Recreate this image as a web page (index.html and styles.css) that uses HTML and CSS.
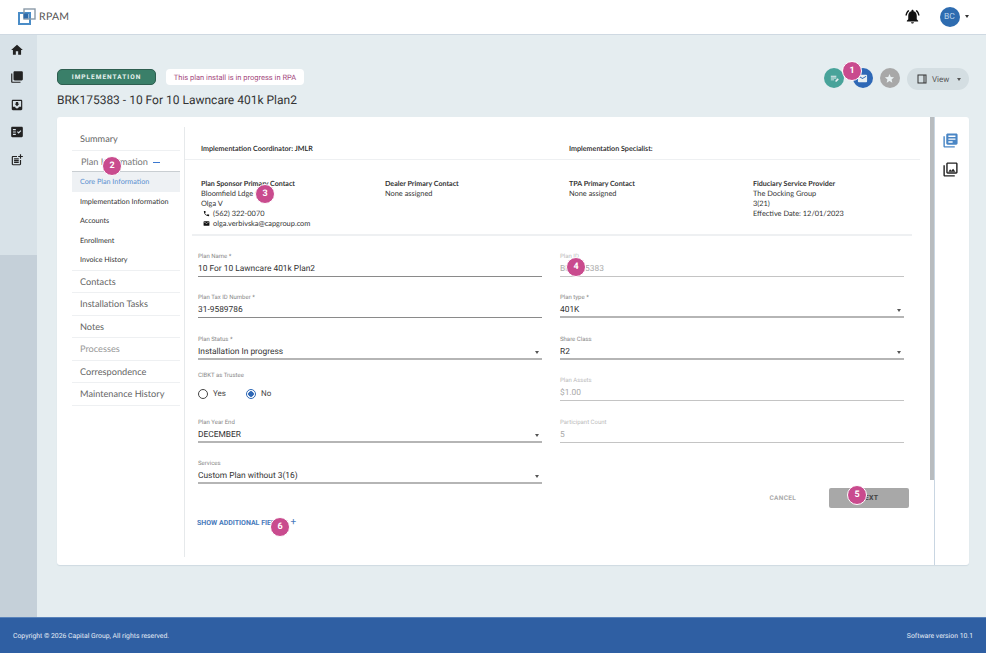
FILE: index.html
```html
<!DOCTYPE html>
<html lang="en">
<head>
<meta charset="utf-8">
<title>RPAM</title>
<link rel="stylesheet" href="styles.css">
</head>
<body>
<div class="app">
  <header class="topbar">
    <div class="brand">
      <svg class="logo" viewBox="0 0 18 17"><rect x="1" y="5" width="11" height="11" fill="none" stroke="#4a8cc7" stroke-width="2"/><rect x="6" y="1" width="11" height="10" fill="none" stroke="#8a9aa8" stroke-width="1.4"/><rect x="5.5" y="5.5" width="5" height="5" fill="#2f6aa8"/></svg>
      <span class="brand-name">RPAM</span>
    </div>
    <div class="top-right">
      <svg class="bell" viewBox="0 0 24 24"><path d="M7.58 4.08 6.15 2.65C3.75 4.48 2.17 7.3 2.03 10.5h2c.15-2.65 1.51-4.97 3.55-6.42zm12.39 6.42h2c-.15-3.2-1.73-6.02-4.12-7.85l-1.42 1.43c2.02 1.45 3.39 3.77 3.54 6.42zM18 11c0-3.07-1.64-5.64-4.5-6.32V4c0-.83-.67-1.5-1.5-1.5s-1.5.67-1.5 1.5v.68C7.63 5.36 6 7.92 6 11v5l-2 2v1h16v-1l-2-2v-5zm-6 11c.14 0 .27-.01.4-.04.65-.14 1.18-.58 1.44-1.18.1-.24.15-.5.15-.78h-4c.01 1.1.9 2 2.01 2z"/></svg>
      <span class="avatar">BC</span>
      <span class="caret dark"></span>
    </div>
  </header>
  <div class="middle">
    <aside class="side">
      <div class="side-top">
        <svg class="side-icon" viewBox="0 0 24 24"><path d="M10 20v-6h4v6h5v-8h3L12 3 2 12h3v8z"/></svg>
        <svg class="side-icon" viewBox="0 0 24 24"><path d="M4 6H2v14c0 1.1.9 2 2 2h14v-2H4V6zm16-4H8c-1.1 0-2 .9-2 2v12c0 1.1.9 2 2 2h12c1.1 0 2-.9 2-2V4c0-1.1-.9-2-2-2z"/></svg>
        <svg class="side-icon" viewBox="0 0 24 24"><path d="M19 3H5c-1.11 0-2 .9-2 2v14c0 1.1.89 2 2 2h14c1.1 0 2-.9 2-2V5c0-1.1-.9-2-2-2zm0 12h-4c0 1.66-1.35 3-3 3s-3-1.34-3-3H5V5h14v10zm-3-5h-2V7h-4v3H8l4 4 4-4z"/></svg>
        <svg class="side-icon" viewBox="0 0 24 24"><path d="M20 3H4c-1.1 0-2 .9-2 2v14c0 1.1.9 2 2 2h16c1.1 0 2-.9 2-2V5c0-1.1-.9-2-2-2zM10 17H5v-2h5v2zm0-4H5v-2h5v2zm0-4H5V7h5v2zm4.82 6L12 12.16l1.41-1.41 1.41 1.42L17.99 9l1.42 1.42L14.82 15z"/></svg>
        <svg class="side-icon" viewBox="0 0 24 24"><path d="M17 19.22H5V7h7V5H5c-1.1 0-2 .9-2 2v12c0 1.1.9 2 2 2h12c1.1 0 2-.9 2-2v-7h-2v7.22zM19 2h-2v3h-3c.01.01 0 2 0 2h3v2.99c.01.01 2 0 2 0V7h3V5h-3V2zM7 9h8v2H7V9zm0 3v2h8v-2h-3H7zm0 3h8v2H7v-2z"/></svg>
      </div>
      <div class="side-rest"></div>
    </aside>
    <main class="main">
      <div class="page-head">
        <div class="head-left">
          <div class="pills">
            <span class="status-pill">IMPLEMENTATION</span>
            <span class="notice-pill">This plan install is in progress in RPA</span>
          </div>
          <h1 class="title">BRK175383 - 10 For 10 Lawncare 401k Plan2</h1>
        </div>
        <div class="head-actions">
          <span class="round teal"><svg viewBox="0 0 24 24"><path d="M4 6h12v2H4zm0 4h12v2H4zm0 4h7v2H4zm10 5v-2.4l5-5 2.4 2.4-5 5z"/></svg></span>
          <span class="round blue"><svg viewBox="0 0 24 24"><path d="M20 4H4a2 2 0 0 0-2 2v12a2 2 0 0 0 2 2h16a2 2 0 0 0 2-2V6a2 2 0 0 0-2-2zm0 4-8 5-8-5V6l8 5 8-5z"/></svg></span>
          <span class="round grey"><svg viewBox="0 0 24 24"><path d="M12 17.27 18.18 21l-1.64-7.03L22 9.24l-7.19-.61L12 2 9.19 8.63 2 9.24l5.46 4.73L5.82 21z"/></svg></span>
          <span class="view-btn">
            <svg viewBox="0 0 24 24"><path d="M3 3h18v18H3zm2 2v14h10V5zm12 0v14h2V5z" fill-rule="evenodd"/></svg>
            <span>View</span>
            <span class="caret mid"></span>
          </span>
        </div>
      </div>
      <section class="card">
        <nav class="nav">
          <a class="nav-top bordered">Summary</a>
          <a class="nav-top open">Plan Information <span class="minus"></span></a>
          <a class="nav-sub active">Core Plan Information</a>
          <a class="nav-sub">Implementation Information</a>
          <a class="nav-sub">Accounts</a>
          <a class="nav-sub">Enrollment</a>
          <a class="nav-sub bordered">Invoice History</a>
          <a class="nav-top bordered">Contacts</a>
          <a class="nav-top bordered">Installation Tasks</a>
          <a class="nav-top bordered">Notes</a>
          <a class="nav-top bordered muted">Processes</a>
          <a class="nav-top bordered">Correspondence</a>
          <a class="nav-top bordered">Maintenance History</a>
        </nav>
        <div class="content">
          <div class="coord-row">
            <div class="cell">Implementation Coordinator: JMLR</div>
            <div class="cell">Implementation Specialist:</div>
          </div>
          <div class="contacts">
            <div class="contact">
              <strong>Plan Sponsor Primary Contact</strong>
              <span>Bloomfield Ldge Corp</span>
              <span>Olga V</span>
              <span class="icon-line"><svg viewBox="0 0 24 24"><path d="M6.62 10.79c1.44 2.83 3.76 5.14 6.59 6.59l2.2-2.2c.27-.27.67-.36 1.02-.24 1.12.37 2.33.57 3.57.57.55 0 1 .45 1 1V20c0 .55-.45 1-1 1-9.39 0-17-7.61-17-17 0-.55.45-1 1-1h3.5c.55 0 1 .45 1 1 0 1.25.2 2.45.57 3.57.11.35.03.74-.25 1.02l-2.2 2.2z"/></svg>(562) 322-0070</span>
              <span class="icon-line"><svg viewBox="0 0 24 24"><path d="M20 4H4c-1.1 0-1.99.9-1.99 2L2 18c0 1.1.9 2 2 2h16c1.1 0 2-.9 2-2V6c0-1.1-.9-2-2-2zm0 4-8 5-8-5V6l8 5 8-5v2z"/></svg>olga.verbivska@capgroup.com</span>
            </div>
            <div class="contact">
              <strong>Dealer Primary Contact</strong>
              <span>None assigned</span>
            </div>
            <div class="contact">
              <strong>TPA Primary Contact</strong>
              <span>None assigned</span>
            </div>
            <div class="contact">
              <strong>Fiduciary Service Provider</strong>
              <span>The Docking Group</span>
              <span>3(21)</span>
              <span>Effective Date: 12/01/2023</span>
            </div>
          </div>
          <div class="form">
            <div class="field"><label>Plan Name *</label><div class="value">10 For 10 Lawncare 401k Plan2</div></div>
            <div class="field disabled"><label>Plan ID</label><div class="value">BRK175383</div></div>
            <div class="field"><label>Plan Tax ID Number *</label><div class="value">31-9589786</div></div>
            <div class="field select"><label>Plan type *</label><div class="value">401K<span class="caret small"></span></div></div>
            <div class="field select"><label>Plan Status *</label><div class="value">Installation In progress<span class="caret small"></span></div></div>
            <div class="field select"><label>Share Class</label><div class="value">R2<span class="caret small"></span></div></div>
            <div class="field radio-field"><label>CIBKT as Trustee</label>
              <div class="radios">
                <span class="radio"><i class="dot"></i>Yes</span>
                <span class="radio"><i class="dot on"></i>No</span>
              </div>
            </div>
            <div class="field disabled"><label>Plan Assets</label><div class="value">$1.00</div></div>
            <div class="field select"><label>Plan Year End</label><div class="value">DECEMBER<span class="caret small"></span></div></div>
            <div class="field disabled"><label>Participant Count</label><div class="value">5</div></div>
            <div class="field select"><label>Services</label><div class="value">Custom Plan without 3(16)<span class="caret small"></span></div></div>
          </div>
          <div class="form-actions">
            <span class="cancel">CANCEL</span>
            <span class="next">NEXT</span>
          </div>
          <a class="more">SHOW ADDITIONAL FIELDS <span class="plus">+</span></a>
        </div>
        <div class="scroll"><div class="thumb"></div></div>
        <div class="rail">
          <svg class="rail-blue" viewBox="0 0 24 24"><path d="M4 6H2v14c0 1.1.9 2 2 2h14v-2H4V6zm16-4H8c-1.1 0-2 .9-2 2v12c0 1.1.9 2 2 2h12c1.1 0 2-.9 2-2V4c0-1.1-.9-2-2-2zm-1 9H9V9h10v2zm-4 4H9v-2h6v2zm4-8H9V5h10v2z"/></svg>
          <svg class="rail-dark" viewBox="0 0 24 24"><path d="M20 4v12H8V4h12m0-2H8c-1.1 0-2 .9-2 2v12c0 1.1.9 2 2 2h12c1.1 0 2-.9 2-2V4c0-1.1-.9-2-2-2zm-8.5 9.67 1.69 2.26 2.48-3.1L19 15H9zM2 6v14c0 1.1.9 2 2 2h14v-2H4V6H2z"/></svg>
        </div>
      </section>
    </main>
  </div>
  <footer class="footer">
    <span>Copyright © 2026 Capital Group, All rights reserved.</span>
    <span>Software version 10.1</span>
  </footer>
  <span class="pin p1">1</span>
  <span class="pin p2">2</span>
  <span class="pin p3">3</span>
  <span class="pin p4">4</span>
  <span class="pin p5">5</span>
  <span class="pin p6">6</span>
</div>
</body>
</html>
```
FILE: styles.css
```css
* { box-sizing: border-box; }
html, body { margin: 0; padding: 0; }
body { font-family: "Roboto", "Liberation Sans", sans-serif; color: #333; text-rendering: geometricPrecision; }
.app { position: relative; width: 986px; height: 653px; overflow: hidden; display: flex; flex-direction: column; background: #e5edf0; }

.topbar { height: 35px; flex: none; background: #fff; border-bottom: 1px solid #cfd9e2; display: flex; justify-content: space-between; align-items: center; padding: 0 17.5px 1px 18px; }
.brand { display: flex; align-items: center; gap: 3px; }
.logo { width: 18px; height: 17px; }
.brand-name { font-family: "Lato", sans-serif; font-size: 10.5px; color: #555; letter-spacing: .3px; }
.top-right { display: flex; align-items: center; }
.bell { width: 17px; height: 17px; fill: #111; margin-right: 19px; }
.avatar { width: 20px; height: 20px; border-radius: 50%; background: #2e6cb0; color: #b9d2ea; font-size: 8.5px; display: flex; align-items: center; justify-content: center; margin-right: 5px; }
.caret { display: inline-block; width: 0; height: 0; border-left: 2.5px solid transparent; border-right: 2.5px solid transparent; border-top: 3px solid #444; }
.caret.dark { border-top-color: #333; }
.caret.mid { border-top-color: #555; }

.middle { flex: 1; display: flex; min-height: 0; }
.side { width: 37px; flex: none; display: flex; flex-direction: column; }
.side-top { height: 220px; background: #d8e2e8; display: flex; flex-direction: column; align-items: center; padding: 8px 0 0 0; gap: 13.4px; }
.side-rest { flex: 1; background: #c5d0d9; }
.side-icon { width: 14px; height: 14px; fill: #222; margin-right: 4px; flex: none; }

.main { flex: 1; padding: 33px 17px 0 20px; min-width: 0; }
.page-head { display: flex; justify-content: space-between; align-items: flex-start; height: 49px; }
.pills { display: flex; align-items: center; gap: 10px; margin-top: 1px; }
.status-pill { width: 99px; height: 16px; border-radius: 5px; background: #3a7f69; border: 1px solid #2e5e50; color: #e8f3ef; font-size: 6.5px; font-weight: 700; letter-spacing: 1px; display: flex; align-items: center; justify-content: center; }
.notice-pill { width: 138px; height: 16px; border-radius: 4px; background: #fff; color: #a54a80; font-size: 7.5px; display: flex; align-items: center; justify-content: center; }
.title { margin: 8px 0 0; font-size: 12px; line-height: 15px; font-weight: 400; color: #333; }

.head-actions { display: flex; align-items: flex-start; height: 22px; }
.round { width: 20px; height: 20px; border-radius: 50%; display: flex; align-items: center; justify-content: center; flex: none; }
.round svg { width: 11px; height: 11px; fill: #e9f0f2; }
.round.teal { background: #48a39a; margin-right: 8.5px; }
.round.blue { background: #2e68b6; margin-right: 7px; }
.round.grey { background: #a8a8a8; margin-right: 7.5px; }
.view-btn { width: 62px; height: 22px; border-radius: 11px; background: #d4dee2; display: flex; align-items: center; padding-left: 9px; gap: 4px; font-size: 8px; color: #555; }
.view-btn svg { width: 12px; height: 12px; fill: #333; }
.view-btn .caret { margin-left: 4px; }

.card { height: 448px; background: #fff; border-radius: 3px; box-shadow: 0 1px 1px #cfdae1; display: flex; padding-top: 10px; }

.nav { width: 128px; flex: none; padding: 1px 4px 8px 15px; border-right: 1px solid #e6e9eb; margin-bottom: 8px; font-family: "Lato", sans-serif; }
.nav a { display: block; }
.nav-top { font-size: 9.2px; height: 22.5px; line-height: 22.5px; padding-left: 8px; color: #666; }
.nav-top.bordered { border-bottom: 1px solid #eef0f2; }
.nav-top.muted { color: #999; }
.nav-top.open { border-bottom: 1px solid #c9ced2; height: 21.5px; padding-left: 9px; color: #777; }
.minus { display: inline-block; width: 7px; height: 1px; background: #3b78d0; margin-left: 3px; vertical-align: middle; }
.nav-sub { font-size: 7.2px; height: 19.6px; line-height: 19px; padding-left: 8px; color: #333; }
.nav-sub.active { background: #eef1f4; color: #5a8fd0; }
.nav-sub.bordered { border-bottom: 1px solid #eef0f2; height: 20.6px; }

.content { flex: 1; min-width: 0; display: flex; flex-direction: column; font-family: "Lato", sans-serif; }
.coord-row { height: 33px; display: grid; grid-template-columns: 368px 1fr; padding-left: 16px; margin-right: 10px; align-items: center; border-bottom: 1px solid #eef0f2; font-size: 7.2px; color: #222; font-weight: 600; }
.cell { padding-top: 11px; }
.contacts { display: grid; grid-template-columns: repeat(4, 184px); height: 76px; margin: 0 18px 0 7px; padding: 18.5px 0 0 9px; border-bottom: 2px solid #eef0f2; font-size: 7.4px; line-height: 10px; color: #333; }
.contact { display: flex; flex-direction: column; }
.contact strong { font-weight: 700; font-size: 7.1px; color: #333; }
.icon-line { display: flex; align-items: center; gap: 2px; padding-left: 2px; }
.icon-line svg { width: 7px; height: 7px; fill: #111; margin-right: 1px; }

.form { display: grid; grid-template-columns: 344px 344px; column-gap: 18px; grid-auto-rows: 41.5px; padding-left: 13px; margin-top: -1px; }
.field { display: flex; flex-direction: column; justify-content: flex-end; font-family: "Roboto", sans-serif; }
.field label { font-size: 6px; line-height: 7px; color: #888; }
.value { position: relative; font-size: 8.4px; line-height: 14px; height: 15px; margin-top: 2px; color: #333; border-bottom: 1.5px solid #8a8a8a; }
.select .value { border-bottom: 2px solid #b5b5b5; }
.disabled .value { color: #aaa; border-bottom: 1px solid #c4c4c4; }
.disabled label { color: #bbb; }
.value .caret { position: absolute; right: 3px; top: 6px; }
.caret.small { border-top-color: #555; }
.radio-field { justify-content: flex-start; padding-top: 12px; }
.radios { display: flex; gap: 20px; margin-top: 10px; }
.radio { display: flex; align-items: center; gap: 5px; font-size: 8px; color: #444; }
.dot { width: 10px; height: 10px; border-radius: 50%; border: 1px solid #444; display: block; }
.dot.on { border-color: #2e68b6; background: radial-gradient(circle, #2e68b6 0 2.5px, #fff 3px); }

.form-actions { display: flex; justify-content: flex-end; align-items: center; gap: 33px; margin: 4px 21px 0 0; }
.cancel { font-size: 6.5px; font-weight: 700; color: #aaa; font-family: "Roboto", sans-serif; letter-spacing: .3px; }
.next { width: 80px; height: 20px; background: #a8a8a8; border-radius: 2px; font-size: 7px; font-weight: 700; color: #444; font-family: "Roboto", sans-serif; letter-spacing: .3px; display: flex; align-items: center; justify-content: center; }
.more { margin: 9px 0 0 12px; font-size: 7px; font-weight: 700; line-height: 12px; color: #4a7cbc; font-family: "Roboto", sans-serif; display: flex; align-items: center; gap: 7px; }
.plus { font-size: 10px; font-weight: 400; }

.scroll { width: 5px; flex: none; margin-top: -10px; border-right: 1px solid #c9d6e2; }
.thumb { width: 4px; height: 363px; background: #b8bcbf; }
.rail { width: 34px; flex: none; margin-top: -10px; padding: 15px 0 0 7px; display: flex; flex-direction: column; gap: 12px; }
.rail svg { width: 17px; height: 17px; }
.rail-blue { fill: #4a86c5; }
.rail-dark { fill: #222; }

.footer { height: 36px; flex: none; background: #2f5fa3; border-top: 1px solid #5a83ba; color: #e6edf6; font-size: 6.85px; display: flex; justify-content: space-between; align-items: center; padding: 1px 13px 0; }

.pin { position: absolute; width: 20px; height: 20px; border-radius: 50%; background: #c94b8e; border: 1.5px solid #fff; color: #fff; font-size: 9px; font-weight: 700; display: flex; align-items: center; justify-content: center; }
.p1 { left: 842px; top: 61px; }
.p2 { left: 102px; top: 156px; }
.p3 { left: 255px; top: 184px; }
.p4 { left: 566px; top: 257px; }
.p5 { left: 847px; top: 485px; }
.p6 { left: 270px; top: 517px; }
```
